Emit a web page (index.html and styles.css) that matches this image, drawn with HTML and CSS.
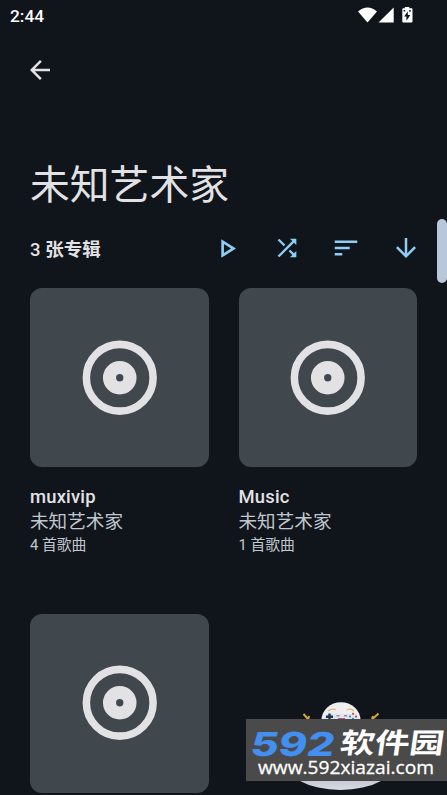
FILE: index.html
```html
<!DOCTYPE html>
<html lang="zh-CN">
<head>
<meta charset="utf-8">
<meta name="viewport" content="width=device-width">
<title>未知艺术家</title>
<link rel="stylesheet" href="styles.css">
</head>
<body>
<svg class="defs" aria-hidden="true">
  <symbol id="disc" viewBox="0 0 76 76">
    <circle cx="38" cy="38" r="33.6" fill="none" stroke="#e2e2e5" stroke-width="7.6"/>
    <circle cx="38" cy="38" r="10.3" fill="none" stroke="#e2e2e5" stroke-width="13.2"/>
  </symbol>
</svg>
<div class="screen">
  <header class="status">
    <span>2:44</span>
    <svg class="status-icons" viewBox="0 0 56 18" width="56" height="18">
      <path fill="#fff" d="M0 4.5Q9.5-3.4 19 4.5L9.5 15.5ZM20.5 15.5 35.7.5V15.5Z"/>
      <path fill="#fff" d="M46.8 0h4.5v1.2h2.2q1 0 1 1v12.2q0 1-1 1h-8.2q-1 0-1-1V2.2q0-1 1-1h1.5z"/>
      <path fill="#10141b" d="M49.8 4.3 46.2 9.4h2.2v4.3l4-5.7h-2.6zM45.6 3.1h1.6v1.5h-1.6zM51.2 3.1h1.5v1.7h-1.5z"/>
    </svg>
  </header>
  <nav class="nav">
    <svg viewBox="0 0 24 24" width="30" height="30"><path fill="#e2e2e5" d="M20 11H7.83l5.59-5.59L12 4l-8 8 8 8 1.41-1.41L7.83 13H20z"/></svg>
  </nav>
  <h1>未知艺术家</h1>
  <section class="toolbar">
    <h2>3 <b>张专辑</b></h2>
    <div class="actions">
      <svg viewBox="1.05 0.4 22.45 22.45"><path d="M10 8.64 15.27 12 10 15.36zM8 5v14l11-7z"/></svg>
      <svg viewBox="-.85 -.85 25.7 25.7"><path d="M10.59 9.17 5.41 4 4 5.41l5.17 5.17zM14.5 4l2.04 2.04L4 18.59 5.41 20 17.96 7.46 20 9.5V4zm.33 9.41-1.41 1.41 3.13 3.13L14.5 20H20v-5.5l-2.04 2.04z"/></svg>
      <svg viewBox="0 0 24 24"><path d="M3 18h6v-2H3zM3 6v2h18V6zm0 7h12v-2H3z"/></svg>
      <svg viewBox="0 0 24 24"><path d="m20 12-1.41-1.41L13 16.17V4h-2v12.17l-5.58-5.59L4 12l8 8z"/></svg>
    </div>
  </section>
  <main class="albums">
    <article class="album">
      <div class="cover"><svg><use href="#disc"/></svg></div>
      <h3>muxivip</h3>
      <p class="artist">未知艺术家</p>
      <p class="count">4 首歌曲</p>
    </article>
    <article class="album">
      <div class="cover"><svg><use href="#disc"/></svg></div>
      <h3>Music</h3>
      <p class="artist">未知艺术家</p>
      <p class="count">1 首歌曲</p>
    </article>
    <article class="album">
      <div class="cover"><svg><use href="#disc"/></svg></div>
    </article>
  </main>
  <div class="scrollbar"></div>
  <svg class="watermark" viewBox="246 699 201 96" width="201" height="96">
    <defs><linearGradient id="base" x1="0" y1="0" x2="0" y2="1"><stop offset=".8" stop-color="#c0c3ce"/><stop offset="1" stop-color="#d8dae4"/></linearGradient></defs>
    <ellipse cx="340.5" cy="758" rx="58" ry="32" fill="url(#base)"/>
    <ellipse cx="341" cy="720" rx="19.5" ry="17.8" fill="#eeeeef"/>
    <path d="M328 711q4-3 8-1M347 710q4-2 7 1" fill="none" stroke="#d9bd79" stroke-width="1.3"/>
    <path d="M324 719q2-6 7-5h20q6-1 8 5z" fill="#dce4ed"/>
    <path d="M326 716.8h7M329.5 713.5v6" stroke="#183954" stroke-width="2.4"/>
    <path d="M336.5 715.8h3M344 715.8h3M338 718.6h7" stroke="#b14d70" stroke-width="1"/>
    <g fill="#168b9b"><circle cx="350" cy="716.5" r="1"/><circle cx="353" cy="713.8" r="1" fill="#c82d51"/><circle cx="356" cy="716.5" r="1" fill="#c82d51"/><circle cx="353" cy="718.7" r="1"/></g>
    <path d="m303.5 714 4.5 5M309 716l-1 4M378.5 713.5l-6 5.5M373 716l-1 3" fill="none" stroke="#d8a438" stroke-width="2"/>
    <rect x="246" y="719" width="201" height="62" fill="#4a4a4a"/>
    <g transform="translate(249 755.5) skewX(-10)"><text class="brand-num" x="0" y="0" textLength="84" lengthAdjust="spacingAndGlyphs">592</text></g>
    <g transform="translate(339 752.5) skewX(-8)"><text class="brand-name" x="0" y="0" textLength="104" lengthAdjust="spacingAndGlyphs">软件园</text></g>
    <text class="brand-url" x="258" y="774" textLength="176" lengthAdjust="spacingAndGlyphs">www.592xiazai.com</text>
  </svg>
</div>
</body>
</html>
```

FILE: styles.css
```css
* { box-sizing: border-box; }
body {
  margin: 0;
  background: #10141b;
  color: #e2e2e5;
  font-family: Roboto, "Noto Sans CJK SC", sans-serif;
}
h1, h2, h3, p { margin: 0; }
svg { display: block; flex: none; }
.defs { position: absolute; width: 0; height: 0; }
.screen {
  position: relative;
  height: 795px;
  overflow: hidden;
  padding: 0 30px;
}
.status {
  display: flex;
  justify-content: space-between;
  height: 32px;
  margin: 0 -20px;
  padding-top: 6px;
  color: #fff;
  font-size: 17.3px;
  font-weight: 500;
  line-height: 20px;
}
.status-icons { margin: 1px 23.5px 0 0; }
.nav {
  height: 75px;
  margin-left: -5px;
  padding-top: 22.5px;
}
h1 {
  height: 70px;
  margin-top: 49px;
  font-size: 39.8px;
  font-weight: 400;
  line-height: 60px;
  white-space: nowrap;
}
.toolbar {
  display: flex;
  align-items: center;
  justify-content: space-between;
  height: 44px;
}
h2 {
  padding-top: 3px;
  font-size: 18.5px;
  font-weight: 500;
  line-height: 28px;
}
h2 b { font-weight: 700; }
.actions {
  display: flex;
  gap: 29.5px;
  margin-right: -3.5px;
}
.actions svg { width: 30px; height: 30px; fill: #8fcdf5; }
.albums {
  display: grid;
  grid-template-columns: 178.5px 178.5px;
  column-gap: 30px;
  grid-auto-rows: 325.5px;
  margin-top: 18px;
}
.cover {
  display: grid;
  place-items: center;
  height: 179px;
  margin-bottom: 17px;
  border-radius: 12px;
  background: #41484d;
}
.cover svg { width: 75.5px; height: 75.5px; }
h3 {
  font-size: 18.4px;
  font-weight: 500;
  line-height: 25px;
  letter-spacing: .2px;
}
.artist, .count { color: #c1c7ce; }
.artist { padding-top: 1px; font-size: 18.6px; line-height: 25px; }
.count { font-size: 14.8px; line-height: 21px; }
.scrollbar {
  position: absolute;
  top: 219px;
  right: 0;
  width: 10px;
  height: 64px;
  border-radius: 5px;
  background: #b8c8d9;
}
.watermark { position: absolute; right: 0; bottom: 0; }
.brand-num {
  fill: #438fef;
  font: 800 33px Inter, sans-serif;
}
.brand-name {
  fill: #fff;
  font: 700 28px "Noto Sans CJK SC", sans-serif;
}
.brand-url {
  fill: #fff;
  stroke: #fff;
  stroke-width: .3px;
  font: 500 19px "Open Sans", sans-serif;
}
```
